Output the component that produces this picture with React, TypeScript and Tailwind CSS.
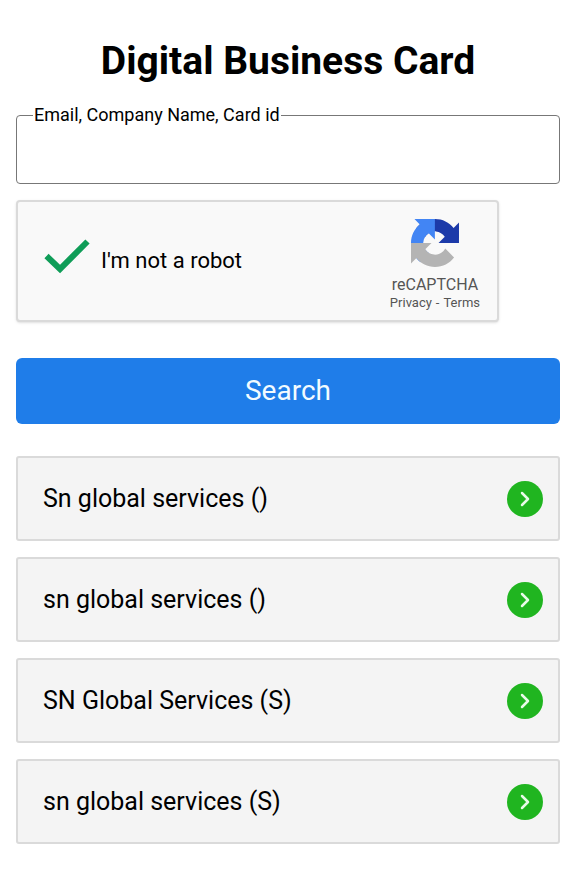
import React, { useState } from 'react';
import { ChevronRight } from 'lucide-react';

interface Card {
  id: number;
  name: string;
  tag: string;
}

const cards: Card[] = [
  { id: 1, name: 'Sn global services', tag: '' },
  { id: 2, name: 'sn global services', tag: '' },
  { id: 3, name: 'SN Global Services', tag: 'S' },
  { id: 4, name: 'sn global services', tag: 'S' },
];

const RecaptchaLogo: React.FC = () => (
  <svg viewBox="0 0 64 64" className="w-12 h-12" aria-hidden="true">
    <path
      fill="#1c3aa9"
      d="M64 31.955l-.033-1.37V4.687l-7.16 7.16C50.948 4.674 42.033.093 32.05.093c-10.4 0-19.622 4.96-25.458 12.64l11.736 11.86a15.55 15.55 0 0 1 4.754-5.334c2.05-1.6 4.952-2.906 8.968-2.906.485 0 .86.057 1.135.163 4.976.393 9.288 3.14 11.828 7.124l-8.307 8.307L64 31.953"
    />
    <path
      fill="#4285f4"
      d="M31.862.094l-1.37.033H4.594l7.16 7.16C4.58 13.147 0 22.06 0 32.046c0 10.4 4.96 19.622 12.64 25.458L24.5 45.768a15.55 15.55 0 0 1-5.334-4.754c-1.6-2.05-2.906-4.952-2.906-8.968 0-.485.057-.86.163-1.135.393-4.976 3.14-9.288 7.124-11.828l8.307 8.307L31.86.095"
    />
    <path
      fill="#b4b4b4"
      d="M.001 32.045l.033 1.37v25.898l7.16-7.16c5.86 7.173 14.774 11.754 24.76 11.754 10.4 0 19.622-4.96 25.458-12.64l-11.736-11.86a15.55 15.55 0 0 1-4.754 5.334c-2.05 1.6-4.952 2.906-8.968 2.906-.485 0-.86-.057-1.135-.163-4.976-.393-9.288-3.14-11.828-7.124l8.307-8.307c-10.522.04-22.4.066-27.295-.005"
    />
  </svg>
);

const Recaptcha: React.FC = () => {
  const [checked, setChecked] = useState(true);

  return (
    <div className="flex items-center justify-between max-w-[483px] h-[122px] mt-4 pl-[26px] pr-[17px] bg-[#f9f9f9] border-2 border-[#dadada] rounded-[4px] shadow-sm">
      <div className="flex items-center">
        <span className="grid w-[46px] h-9 mr-[11px] mb-2">
          <input
            id="robot"
            type="checkbox"
            checked={checked}
            onChange={(e) => setChecked(e.target.checked)}
            className="appearance-none col-start-1 row-start-1 w-full h-full cursor-pointer"
          />
          {checked && (
            <svg
              viewBox="0 0 46 36"
              fill="none"
              stroke="#0f9d58"
              strokeWidth="6"
              className="col-start-1 row-start-1 pointer-events-none"
              aria-hidden="true"
            >
              <path d="M2.500 17L16 30L43.500 2.500" />
            </svg>
          )}
        </span>
        <label htmlFor="robot" className="text-[22px] leading-7 text-black">
          I'm not a robot
        </label>
      </div>
      <div className="flex flex-col items-center pt-2">
        <RecaptchaLogo />
        <p className="mt-2 text-base leading-5 text-[#555555]">reCAPTCHA</p>
        <div className="flex gap-1 text-[13px] leading-4 text-[#555555]">
          <a href="#privacy">Privacy</a>
          <span>-</span>
          <a href="#terms">Terms</a>
        </div>
      </div>
    </div>
  );
};

const App: React.FC = () => {
  return (
    <main className="bg-white px-4 pt-9 pb-10 font-['Roboto',sans-serif] text-black">
      <h1 className="text-center text-[39px] leading-[50px] font-bold">Digital Business Card</h1>

      <form onSubmit={(e) => e.preventDefault()} className="mt-4">
        <fieldset className="border border-[#777777] rounded-[4px] px-4">
          <legend className="px-px text-[18px] leading-[26px]">
            <label htmlFor="query">Email, Company Name, Card id</label>
          </legend>
          <input id="query" type="text" className="block w-full h-[55px] text-xl outline-none" />
        </fieldset>

        <Recaptcha />

        <button
          type="submit"
          className="block w-full h-[66px] mt-9 bg-[#1f7de9] text-[#f2fbff] text-[28px] leading-8 rounded-md"
        >
          Search
        </button>
      </form>

      <ul className="flex flex-col gap-4 mt-8">
        {cards.map((card) => (
          <li key={card.id}>
            <a
              href={`#card-${card.id}`}
              className="flex items-center justify-between h-[85px] pl-[25px] pr-[15px] bg-[#f4f4f4] border-2 border-[#dadada] rounded-[3px]"
            >
              <span className="text-[25px] leading-8">
                {card.name} ({card.tag})
              </span>
              <span className="flex items-center justify-center w-9 h-9 rounded-full bg-[#20b520] text-[#e9fbe9]">
                <ChevronRight className="w-6 h-6" strokeWidth={2.5} />
              </span>
            </a>
          </li>
        ))}
      </ul>
    </main>
  );
};

export default App;
